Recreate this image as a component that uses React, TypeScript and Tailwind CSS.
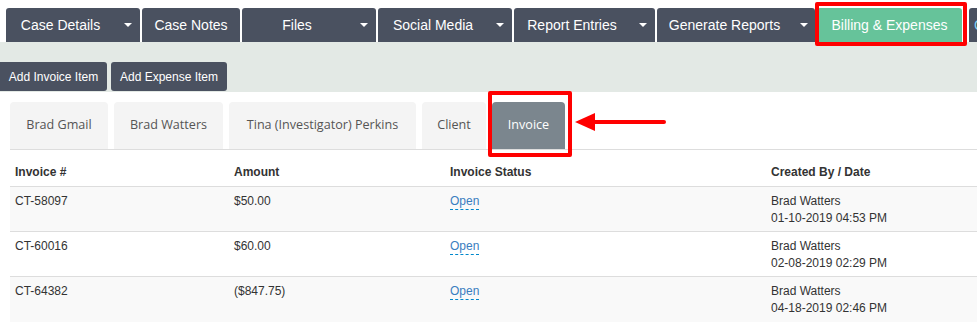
import React from "react";

const Caret = () => (
  <span className="inline-block w-0 h-0 border-x-[4px] border-x-transparent border-t-[4px] border-t-white" />
);

type NavItem = { label: string; main: number; caret?: number; active?: boolean };

const nav: NavItem[] = [
  { label: "Case Details", main: 109, caret: 25 },
  { label: "Case Notes", main: 98 },
  { label: "Files", main: 110, caret: 24 },
  { label: "Social Media", main: 110, caret: 24 },
  { label: "Report Entries", main: 116, caret: 25 },
  { label: "Generate Reports", main: 135, caret: 23 },
  { label: "Billing & Expenses", main: 145, active: true },
];

const tabs = [
  { t: "Brad Gmail", w: 98 },
  { t: "Brad Watters", w: 109 },
  { t: "Tina (Investigator) Perkins", w: 187 },
  { t: "Client", w: 64 },
  { t: "Invoice", w: 73 },
];

const rows = [
  { id: "CT-58097", amount: "$50.00", date: "01-10-2019 04:53 PM" },
  { id: "CT-60016", amount: "$60.00", date: "02-08-2019 02:29 PM" },
  { id: "CT-64382", amount: "($847.75)", date: "04-18-2019 02:46 PM" },
];

export default function App() {
  return (
    <div className="relative w-[977px] h-[332px] overflow-hidden bg-white text-[#333] font-['Liberation_Sans',Arial,sans-serif]">
      {/* top nav */}
      <div className="h-[42px] pt-[8px] pl-[6px] flex gap-[2px] bg-white">
        {nav.map((n) => (
          <div
            key={n.label}
            className={
              "h-[34px] flex items-center rounded-t-[3px] text-[14px] text-white shrink-0 " +
              (n.active ? "bg-[#66c39a]" : "bg-[#4a5160]")
            }
          >
            <div
              className="h-full flex items-center justify-center whitespace-nowrap"
              style={{ width: n.main }}
            >
              {n.label}
            </div>
            {n.caret ? (
              <div className="h-full flex items-center justify-center" style={{ width: n.caret }}>
                <Caret />
              </div>
            ) : null}
          </div>
        ))}
        <div className="ml-[5px] h-[34px] w-[40px] shrink-0 rounded-t-[3px] bg-[#4a5160] pl-[5px] flex items-center text-[14px] text-[#7fd0f5]">
          C
        </div>
      </div>

      {/* action band */}
      <div className="h-[50px] bg-[#e3e9e5] flex items-end gap-[4px] pb-[1px]">
        <button className="h-[29px] w-[107px] rounded-r-[3px] bg-[#4a5160] text-white text-[12px] flex items-center justify-center">
          Add Invoice Item
        </button>
        <button className="h-[29px] w-[116px] rounded-[3px] bg-[#4a5160] text-white text-[12px] flex items-center justify-center">
          Add Expense Item
        </button>
      </div>

      {/* tabs */}
      <div className="mt-[10px] ml-[10px] flex gap-[6px] border-b border-[#dddddd] font-['Open_Sans',sans-serif] text-[12.6px]">
        {tabs.map((t) => (
          <div
            key={t.t}
            className={
              "h-[47px] flex items-center justify-center whitespace-nowrap rounded-t-[4px] shrink-0 " +
              (t.t === "Invoice" ? "bg-[#7b868e] text-white" : "bg-[#f4f4f4] text-[#555]")
            }
            style={{ width: t.w }}
          >
            {t.t}
          </div>
        ))}
      </div>

      {/* table */}
      <div className="ml-[10px] text-[12px] leading-[17px]">
        <div className="grid grid-cols-[219px_216px_321px_1fr] h-[37px] items-end pb-[5px] border-b border-[#dddddd] font-bold">
          <div className="pl-[5px]">Invoice #</div>
          <div className="pl-[5px]">Amount</div>
          <div className="pl-[5px]">Invoice Status</div>
          <div className="pl-[5px]">Created By / Date</div>
        </div>
        {rows.map((r, i) => (
          <div
            key={r.id}
            className={
              "grid grid-cols-[219px_216px_321px_1fr] h-[45px] pt-[6px] " +
              (i % 2 === 0 ? "bg-[#f9f9f9] " : "bg-white ") +
              (i < rows.length - 1 ? "border-b border-[#dddddd]" : "")
            }
          >
            <div className="pl-[5px]">{r.id}</div>
            <div className="pl-[5px]">{r.amount}</div>
            <div className="pl-[5px]">
              <span className="inline-block leading-[16px] text-[#3a7ec0] border-b border-dashed border-[#0088cc]">
                Open
              </span>
            </div>
            <div className="pl-[5px]">
              <div>Brad Watters</div>
              <div>{r.date}</div>
            </div>
          </div>
        ))}
      </div>

      {/* annotations */}
      <div className="absolute left-[815px] top-[2px] w-[152px] h-[44px] border-[4px] border-[#ff0000] rounded-[2px]" />
      <div className="absolute left-[488px] top-[91px] w-[84px] h-[66px] border-[4px] border-[#ff0000] rounded-[2px]" />
      <svg className="absolute left-[574px] top-[111px]" width="94" height="22" viewBox="0 0 94 22">
        <polygon points="1,11 21,2 21,20" fill="#ff0000" />
        <line x1="18" y1="11" x2="90" y2="11" stroke="#ff0000" strokeWidth="4" strokeLinecap="round" />
      </svg>
    </div>
  );
}
